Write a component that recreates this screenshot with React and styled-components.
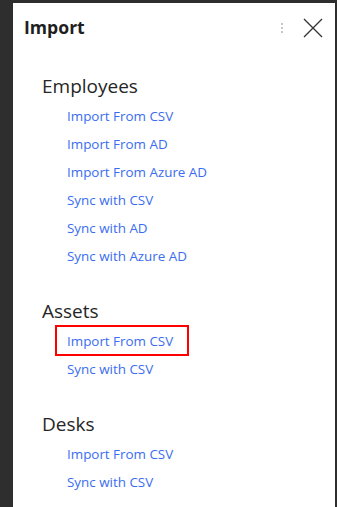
import React, { useState } from 'react';
import styled, { createGlobalStyle } from 'styled-components';

const GlobalStyle = createGlobalStyle`
  html, body {
    margin: 0;
    padding: 0;
    background: #2e2e2e;
    height: 100%;
  }
  body {
    font-family: "Open Sans", "Noto Sans", sans-serif;
    overflow: hidden;
  }
`;

const sections = [
  {
    title: 'Employees',
    links: [
      'Import From CSV',
      'Import From AD',
      'Import From Azure AD',
      'Sync with CSV',
      'Sync with AD',
      'Sync with Azure AD',
    ],
  },
  { title: 'Assets', links: ['Import From CSV', 'Sync with CSV'] },
  { title: 'Desks', links: ['Import From CSV', 'Sync with CSV'] },
];

export default function App() {
  const [active, setActive] = useState('Assets/Import From CSV');

  return (
    <>
      <GlobalStyle />
      <Screen>
        <Panel>
          <Header>
            <Title>Import</Title>
            <Actions>
              <Dots>
                <span />
                <span />
                <span />
              </Dots>
              <CloseButton aria-label="Close">
                <svg width="20" height="20" viewBox="0 0 20 20">
                  <path d="M1 1L19 19M19 1L1 19" stroke="#333" strokeWidth="1.3" fill="none" />
                </svg>
              </CloseButton>
            </Actions>
          </Header>
          <Body>
            {sections.map((s) => (
              <Section key={s.title}>
                <SectionTitle>{s.title}</SectionTitle>
                <LinkList>
                  {s.links.map((l) => {
                    const key = `${s.title}/${l}`;
                    return (
                      <LinkRow key={key}>
                        <LinkItem $active={active === key} onClick={() => setActive(key)}>
                          {l}
                        </LinkItem>
                      </LinkRow>
                    );
                  })}
                </LinkList>
              </Section>
            ))}
          </Body>
        </Panel>
      </Screen>
    </>
  );
}

const Screen = styled.div`
  display: flex;
  height: 100vh;
  padding: 3px 2px 0 13px;
  box-sizing: border-box;
`;

const Panel = styled.div`
  flex: 1;
  background: #fff;
  display: flex;
  flex-direction: column;
`;

const Header = styled.div`
  display: flex;
  align-items: center;
  justify-content: space-between;
  height: 50px;
  padding: 0 12px 0 11px;
`;

const Title = styled.h1`
  margin: 0;
  font-size: 17.6px;
  font-weight: 700;
  color: #1f1f1f;
  margin-top: -2px;
`;

const Actions = styled.div`
  display: flex;
  align-items: center;
  gap: 20px;
`;

const Dots = styled.div`
  display: flex;
  flex-direction: column;
  gap: 2px;
  span {
    width: 2px;
    height: 2px;
    background: #c8c8c8;
  }
`;

const CloseButton = styled.button`
  border: 0;
  background: none;
  padding: 0;
  display: flex;
  cursor: pointer;
`;

const Body = styled.div`
  display: flex;
  flex-direction: column;
  gap: 27px;
  padding: 19px 0 0 29px;
`;

const Section = styled.section`
  display: flex;
  flex-direction: column;
  gap: 2px;
`;

const SectionTitle = styled.h2`
  margin: 0;
  font-size: 19px;
  font-weight: 400;
  line-height: 28px;
  color: #262626;
`;

const LinkList = styled.ul`
  list-style: none;
  margin: 0;
  padding: 0 0 0 13px;
  display: flex;
  flex-direction: column;
`;

const LinkRow = styled.li`
  display: flex;
  height: 28px;
`;

const LinkItem = styled.a`
  position: relative;
  display: block;
  padding: 0 16px 0 12px;
  line-height: 28px;
  font-size: 13.4px;
  color: #3a6df0;
  cursor: pointer;

  &::after {
    content: '';
    display: ${(p) => (p.$active ? 'block' : 'none')};
    position: absolute;
    inset: -2px 0 -1px 0;
    border: 2px solid #f00;
  }
`;
